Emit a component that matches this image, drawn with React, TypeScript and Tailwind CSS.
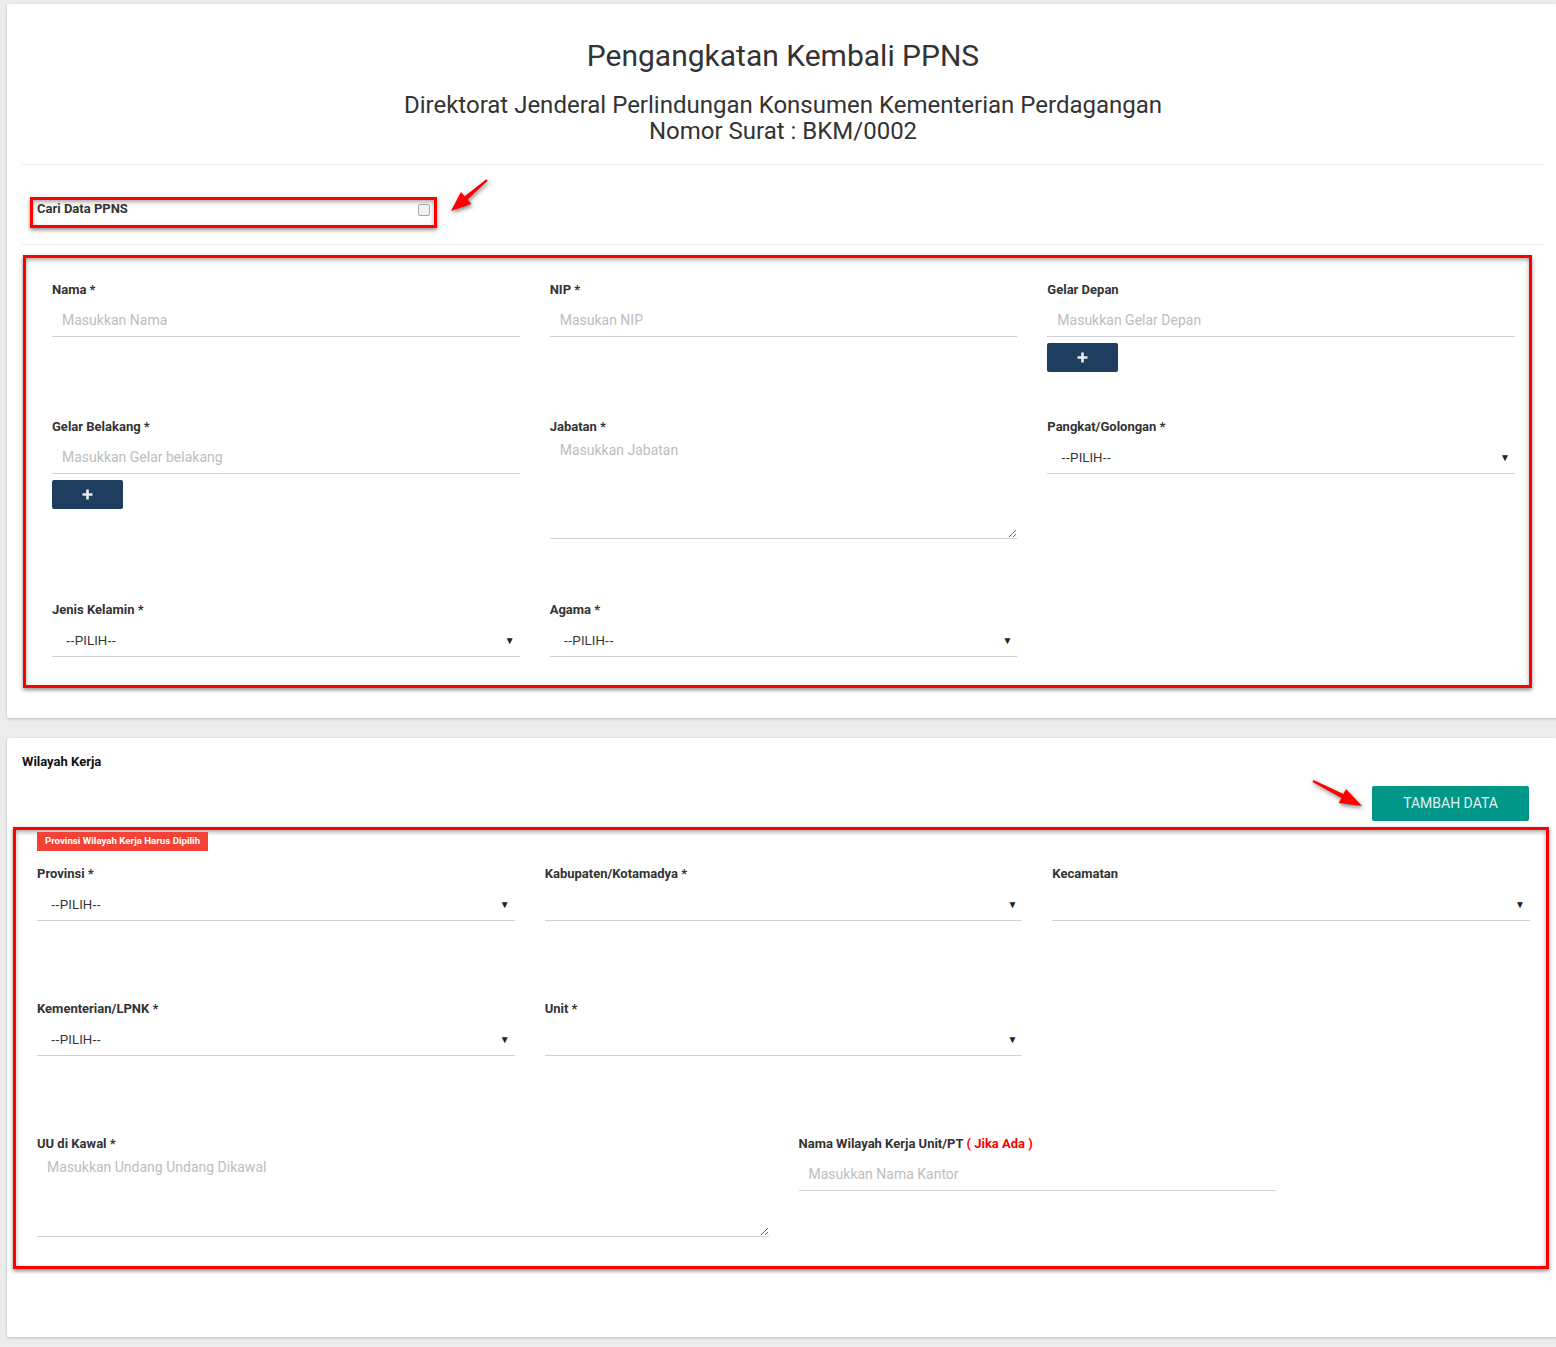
import React from 'react';

// arrow polygon from tail (x1,y1) to tip (x2,y2)
const arrowPoints = (x1: number, y1: number, x2: number, y2: number, head = 20, half = 8) => {
  const dx = x2 - x1;
  const dy = y2 - y1;
  const len = Math.hypot(dx, dy);
  const ux = dx / len;
  const uy = dy / len;
  const nx = -uy;
  const ny = ux;
  const bx = x2 - ux * head;
  const by = y2 - uy * head;
  const p = (x: number, y: number) => `${x.toFixed(1)},${y.toFixed(1)}`;
  return [
    p(x1 + nx * 1, y1 + ny * 1),
    p(bx + nx * 2.2, by + ny * 2.2),
    p(bx + nx * half, by + ny * half),
    p(x2, y2),
    p(bx - nx * half, by - ny * half),
    p(bx - nx * 2.2, by - ny * 2.2),
    p(x1 - nx * 1, y1 - ny * 1),
  ].join(' ');
};

const Label = ({ text, extra }: { text: string; extra?: string }) => (
  <div className="h-[16px] pt-[1px] text-[13px] leading-[16px] font-bold text-[#333]">
    {text}
    {extra && <span className="text-[#ff0000]"> {extra}</span>}
  </div>
);

const TextInput = ({ placeholder }: { placeholder: string }) => (
  <input
    readOnly
    placeholder={placeholder}
    className="mt-[6px] block h-[34px] w-full border-b border-[#d2d2d2] bg-transparent px-[10px] text-[14px] text-[#333] outline-none placeholder:text-[#bdbdbd]"
  />
);

const TextArea = ({ placeholder, height }: { placeholder: string; height: string }) => (
  <textarea
    readOnly
    placeholder={placeholder}
    className={`mt-[6px] block w-full border-b border-[#d2d2d2] bg-transparent px-[10px] pt-[1px] text-[14px] leading-[18px] text-[#333] outline-none placeholder:text-[#bdbdbd] ${height}`}
  />
);

const Select = ({ value }: { value?: string }) => (
  <div className="mt-[6px] flex h-[34px] items-center justify-between border-b border-[#d2d2d2] pl-[14px] pr-[5px] pt-[2px]">
    <span className="font-['Liberation_Sans',Arial,sans-serif] text-[13px] text-[#333]">{value}</span>
    <span className="text-[10px] text-[#222]">▼</span>
  </div>
);

const PlusButton = () => (
  <button className="mt-[6px] flex h-[29px] w-[71px] items-center justify-center rounded-[2px] bg-[#1e3d5f]">
    <svg width="11" height="11" viewBox="0 0 11 11">
      <path d="M5.5 0.5v10M0.5 5.5h10" stroke="#e8edf2" strokeWidth="2.6" />
    </svg>
  </button>
);

const App = () => {
  return (
    <div className="relative min-h-[1347px] w-[1556px] overflow-hidden bg-[#ececec] pt-[4px] font-['Roboto',sans-serif]">
      {/* card 1 */}
      <div className="ml-[7px] w-[1552px] rounded-[2px] bg-white px-[15px] pb-[30px] pt-[34px] shadow-[0_1px_3px_rgba(0,0,0,0.2)]">
        <h1 className="text-center text-[30px] leading-[36px] text-[#333]">Pengangkatan Kembali PPNS</h1>
        <div className="mt-[18px] text-center text-[24px] leading-[26px] text-[#333]">
          <div>Direktorat Jenderal Perlindungan Konsumen Kementerian Perdagangan</div>
          <div>Nomor Surat : BKM/0002</div>
        </div>
        <div className="mt-[20px] border-t border-[#eee]" />

        <div className="ml-[8px] mt-[32px] flex h-[31px] w-[407px] items-start justify-between border-[3px] border-[#ff0000] px-[4px] pt-[1px] shadow-[0_2px_4px_rgba(0,0,0,0.45),inset_0_2px_4px_rgba(0,0,0,0.35)]">
          <span className="text-[13px] leading-[16px] font-bold text-[#333]">Cari Data PPNS</span>
          <span className="mt-[3px] h-[12px] w-[12px] rounded-[2px] border border-[#a8a8a8] bg-[#f2f2f2]" />
        </div>
        <div className="mt-[16px] border-t border-[#eee]" />

        <div className="ml-[1px] mt-[10px] h-[433px] w-[1509px] border-[3px] border-[#ff0000] pl-[26px] pr-[14px] pt-[23px] shadow-[0_2px_4px_rgba(0,0,0,0.45),inset_0_2px_4px_rgba(0,0,0,0.35)]">
          <div className="grid grid-cols-3 gap-x-[30px]">
            <div>
              <Label text="Nama *" />
              <TextInput placeholder="Masukkan Nama" />
            </div>
            <div>
              <Label text="NIP *" />
              <TextInput placeholder="Masukan NIP" />
            </div>
            <div>
              <Label text="Gelar Depan" />
              <TextInput placeholder="Masukkan Gelar Depan" />
              <PlusButton />
            </div>
          </div>
          <div className="mt-[46px] grid grid-cols-3 gap-x-[30px]">
            <div>
              <Label text="Gelar Belakang *" />
              <TextInput placeholder="Masukkan Gelar belakang" />
              <PlusButton />
            </div>
            <div>
              <Label text="Jabatan *" />
              <TextArea placeholder="Masukkan Jabatan" height="h-[99px]" />
            </div>
            <div>
              <Label text="Pangkat/Golongan *" />
              <Select value="--PILIH--" />
            </div>
          </div>
          <div className="mt-[62px] grid grid-cols-3 gap-x-[30px]">
            <div>
              <Label text="Jenis Kelamin *" />
              <Select value="--PILIH--" />
            </div>
            <div>
              <Label text="Agama *" />
              <Select value="--PILIH--" />
            </div>
          </div>
        </div>
      </div>

      {/* card 2 */}
      <div className="ml-[7px] mt-[20px] w-[1552px] rounded-[2px] bg-white px-[15px] pb-[68px] pt-[15px] shadow-[0_1px_3px_rgba(0,0,0,0.2)]">
        <div className="pt-[1px] text-[13px] font-bold leading-[16px] text-[#111]">Wilayah Kerja</div>
        <div className="mt-[16px] flex justify-end">
          <button className="mr-[15px] h-[35px] w-[157px] rounded-[2px] bg-[#009688] text-[14px] text-[#e0f2f1]">TAMBAH DATA</button>
        </div>
        <div className="-ml-[9px] mt-[6px] h-[442px] w-[1536px] border-[3px] border-[#ff0000] pl-[21px] pr-[16px] pt-[2px] shadow-[0_2px_4px_rgba(0,0,0,0.45),inset_0_2px_4px_rgba(0,0,0,0.35)]">
          <div className="flex h-[19px] w-[171px] items-center justify-center bg-[#f44336] text-[9.7px] font-bold text-white">
            Provinsi Wilayah Kerja Harus Dipilih
          </div>
          <div className="mt-[14px] grid grid-cols-3 gap-x-[30px]">
            <div>
              <Label text="Provinsi *" />
              <Select value="--PILIH--" />
            </div>
            <div>
              <Label text="Kabupaten/Kotamadya *" />
              <Select />
            </div>
            <div>
              <Label text="Kecamatan" />
              <Select />
            </div>
          </div>
          <div className="mt-[79px] grid grid-cols-3 gap-x-[30px]">
            <div>
              <Label text="Kementerian/LPNK *" />
              <Select value="--PILIH--" />
            </div>
            <div>
              <Label text="Unit *" />
              <Select />
            </div>
          </div>
          <div className="mt-[79px] grid grid-cols-12 gap-x-[30px]">
            <div className="col-span-6">
              <Label text="UU di Kawal *" />
              <TextArea placeholder="Masukkan Undang Undang Dikawal" height="h-[80px]" />
            </div>
            <div className="col-span-4">
              <Label text="Nama Wilayah Kerja Unit/PT" extra="( Jika Ada )" />
              <TextInput placeholder="Masukkan Nama Kantor" />
            </div>
          </div>
        </div>
      </div>

      {/* annotation arrows */}
      <svg className="absolute left-0 top-0 drop-shadow-[1px_2px_2px_rgba(0,0,0,0.5)]" width="1556" height="1347" pointerEvents="none">
        <polygon points={arrowPoints(487, 180, 451, 211, 20, 8)} fill="#ff0000" />
        <polygon points={arrowPoints(1313, 781, 1362, 806, 22, 8)} fill="#ff0000" />
      </svg>
    </div>
  );
};

export default App;
